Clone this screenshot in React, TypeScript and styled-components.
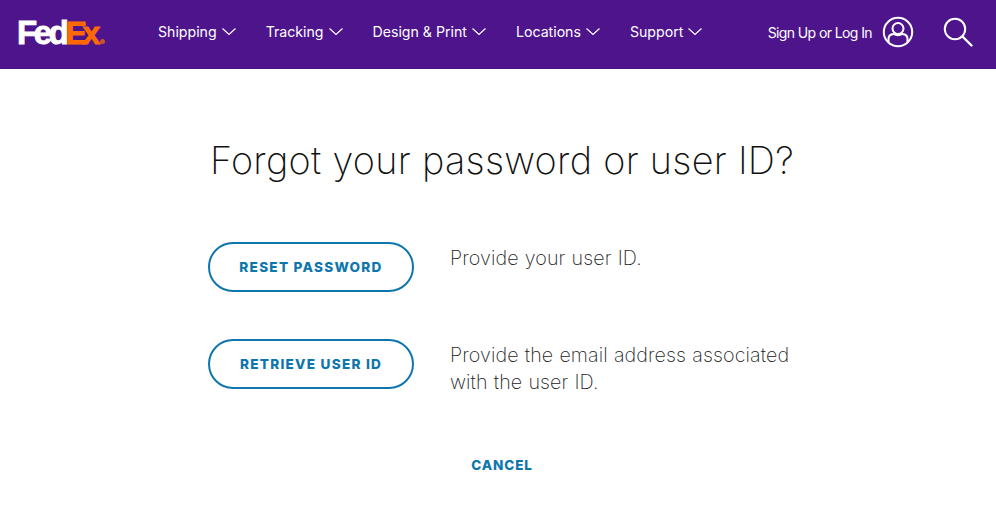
import { createGlobalStyle } from 'styled-components';
import styled from 'styled-components';

const GlobalStyle = createGlobalStyle`
	html, body {
		margin: 0;
		padding: 0;
		background: #fff;
		font-family: Inter, 'Liberation Sans', sans-serif;
	}
`;

const Header = styled.header`
	height: 69px;
	background: #4d148c;
	display: flex;
	align-items: center;
	padding: 0 23px 5px 17px;
	box-sizing: border-box;
	color: #fff;
`;

const Logo = styled.div`
	width: 91px;
	margin-right: 50px;
	display: flex;
	align-items: baseline;
	font-family: 'Liberation Sans', sans-serif;
	font-weight: 700;
	font-size: 33px;
	letter-spacing: -3.4px;
	line-height: 1;
	-webkit-text-stroke: 0.9px currentColor;
`;

const LogoEx = styled.span`
	color: #ff6a00;
	font-size: 32px;
	letter-spacing: -4.2px;
`;

const LogoMark = styled.span`
	width: 5px;
	height: 5px;
	margin-left: 4px;
	border-radius: 50%;
	background: #c9552a;
`;

const Nav = styled.nav`
	display: flex;
	align-items: center;
	gap: 30px;
`;

const NavItem = styled.a`
	display: flex;
	align-items: center;
	gap: 5px;
	font-size: 14.15px;
	font-weight: 400;
	padding-bottom: 1px;
`;

const Account = styled.div`
	margin-left: auto;
	display: flex;
	align-items: center;
`;

const SignIn = styled.a`
	font-size: 14px;
	font-weight: 400;
	letter-spacing: -0.6px;
	margin-right: 10px;
`;

const SearchIcon = styled.svg`
	margin-left: 29px;
`;

const Main = styled.main`
	display: flex;
	flex-direction: column;
	align-items: center;
	padding: 67px 0 0 8px;
`;

const Title = styled.h1`
	margin: 0 0 58px;
	font-size: 37.8px;
	line-height: 48px;
	font-weight: 250;
	letter-spacing: 0.3px;
	color: #111;
`;

const Options = styled.div`
	display: grid;
	grid-template-columns: 206px 346px;
	column-gap: 36px;
	row-gap: 47px;
`;

const Pill = styled.button`
	height: 50px;
	width: 206px;
	border: 2px solid #0f76ad;
	border-radius: 25px;
	background: #fff;
	color: #0f76ad;
	font-family: inherit;
	font-size: 13.6px;
	font-weight: 800;
	letter-spacing: 1.25px;
	padding: 0;
`;

const Hint = styled.p`
	margin: 0;
	padding-top: 3px;
	font-size: 19.7px;
	line-height: 27px;
	font-weight: 250;
	letter-spacing: 0.1px;
	word-spacing: 0.5px;
	color: #222;
`;

const Cancel = styled.a`
	margin-top: 61px;
	color: #0f76ad;
	font-size: 13.5px;
	font-weight: 800;
	letter-spacing: 0.9px;
`;

function Chevron() {
	return (
		<svg width="14" height="9" viewBox="0 0 14 9" fill="none" stroke="#fff" strokeWidth="1.2">
			<path d="M0.5 1.5 L7 7.5 L13.5 1.5" />
		</svg>
	);
}

const navItems = ['Shipping', 'Tracking', 'Design & Print', 'Locations', 'Support'];

export default function App() {
	return (
		<>
			<GlobalStyle />
			<Header>
				<Logo>
					Fed<LogoEx>Ex</LogoEx>
					<LogoMark />
				</Logo>
				<Nav>
					{navItems.map((item) => (
						<NavItem key={item}>
							{item}
							<Chevron />
						</NavItem>
					))}
				</Nav>
				<Account>
					<SignIn>Sign Up or Log In</SignIn>
					<svg width="32" height="32" viewBox="0 0 32 32" fill="none" stroke="#fff" strokeWidth="2">
						<circle cx="16" cy="16" r="14.2" />
						<circle cx="16" cy="12.5" r="5.5" />
						<path d="M6.5 26 V23 Q6.5 18.5 11.5 18 Q16 20.5 20.5 18 Q25.5 18.5 25.5 23 V26" />
					</svg>
					<SearchIcon width="30" height="30" viewBox="0 0 30 30" fill="none" stroke="#fff" strokeWidth="2">
						<circle cx="12" cy="12" r="10.2" />
						<path d="M19.5 19.5 L28.5 28.5" strokeWidth="2.4" strokeLinecap="round" />
					</SearchIcon>
				</Account>
			</Header>
			<Main>
				<Title>Forgot your password or user ID?</Title>
				<Options>
					<Pill>RESET PASSWORD</Pill>
					<Hint>Provide your user ID.</Hint>
					<Pill>RETRIEVE USER ID</Pill>
					<Hint>Provide the email address associated with the user ID.</Hint>
				</Options>
				<Cancel>CANCEL</Cancel>
			</Main>
		</>
	);
}
